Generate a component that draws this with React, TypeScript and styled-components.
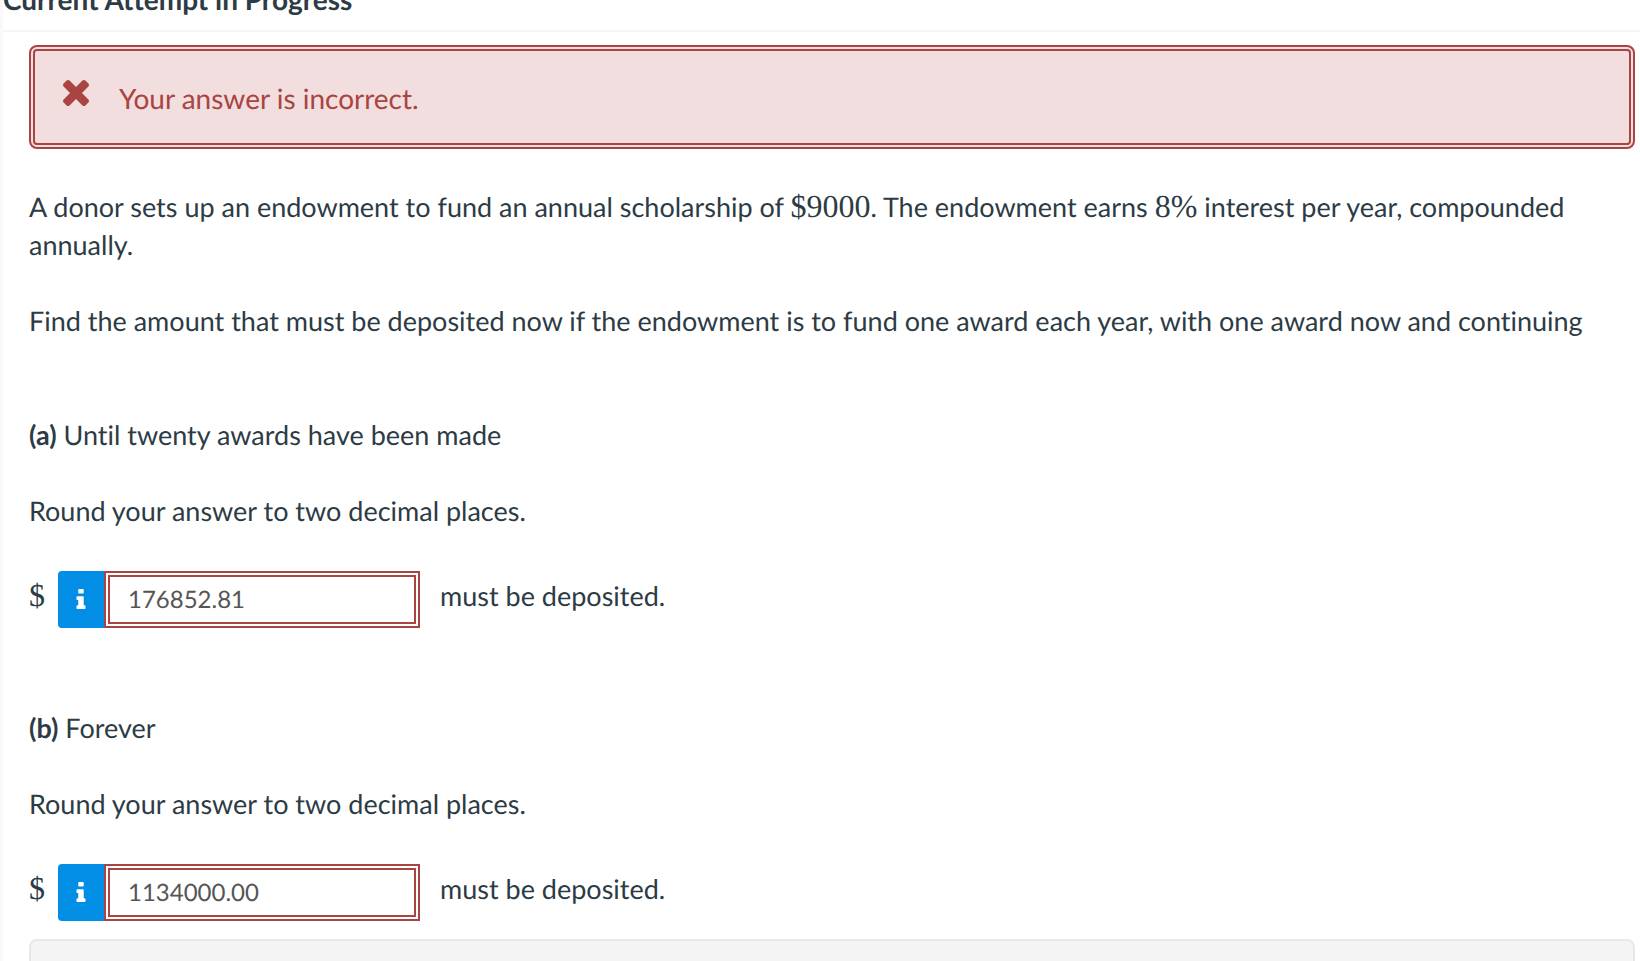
import React from "react";
import styled, { createGlobalStyle } from "styled-components";

const GlobalStyle = createGlobalStyle`
  * { box-sizing: border-box; }
  html, body { margin: 0; background: #fff; overflow: hidden; }
  body {
    font-family: Lato, "Liberation Sans", sans-serif;
    font-size: 27px;
    line-height: 38px;
    color: #2d3b45;
    font-variant-ligatures: none;
    text-rendering: geometricPrecision;
  }
`;

const Page = styled.main`
  border-left: 3px solid #f9f9f9;
  height: 100vh;
  overflow: hidden;
`;

const Header = styled.header`
  height: 32px;
  display: flex;
  align-items: flex-end;
  padding-bottom: 12px;
  border-bottom: 2px solid #f5f5f5;
`;

const Title = styled.h1`
  margin: 0;
  font-size: 28px;
  line-height: 38px;
  font-weight: 700;
`;

const Body = styled.div`
  padding: 13px 5px 0 26px;
`;

const Alert = styled.div`
  display: flex;
  align-items: center;
  gap: 30px;
  height: 104px;
  padding: 2px 28px 0;
  border: 6px double #a94442;
  border-radius: 8px;
  background: #f2dede;
  color: #a94442;
  font-size: 28px;
`;

const CrossIcon = styled.svg`
  width: 26px;
  height: 26px;
  margin-bottom: 10px;
  fill: currentColor;
`;

const InfoIcon = styled.svg`
  width: 10px;
  height: 20px;
  margin-bottom: 2px;
  fill: currentColor;
`;

const Paragraph = styled.p<{ $gap?: number }>`
  margin: ${(p) => p.$gap ?? 38}px 0 0;
`;

const MathText = styled.span`
  font-family: "Liberation Serif", serif;
  font-size: 32px;
  line-height: 1;
`;

const AnswerRow = styled.div`
  display: flex;
  align-items: center;
  margin-top: 41px;
`;

const RowText = styled.span`
  padding-bottom: 8px;
`;

const Group = styled.div`
  display: flex;
  height: 57px;
  margin: 0 20px 0 13px;
`;

const InfoButton = styled.button`
  display: flex;
  align-items: center;
  justify-content: center;
  width: 46px;
  padding: 0;
  border: 0;
  border-radius: 4px 0 0 4px;
  background: #028ee4;
  color: #fff;
`;

const AnswerInput = styled.input`
  width: 316px;
  padding: 0 18px;
  border: 6px double #a94442;
  border-radius: 0;
  background: #fff;
  color: #555;
  font: 24px Lato, "Liberation Sans", sans-serif;
  text-rendering: geometricPrecision;
`;

const Footer = styled.footer`
  height: 80px;
  margin-top: 18px;
  border: 2px solid #e8e8e8;
  border-radius: 8px;
  background: #f4f4f4;
`;

const Answer = ({ label, value }: { label: string; value: string }) => (
  <AnswerRow>
    <RowText><MathText>$</MathText></RowText>
    <Group>
      <InfoButton type="button" aria-label="Answer information">
        <InfoIcon viewBox="576 128 640 1408" aria-hidden="true">
          <path d="M1216 1344v128q0 26-19 45t-45 19h-512q-26 0-45-19t-19-45v-128q0-26 19-45t45-19h64v-384h-64q-26 0-45-19t-19-45v-128q0-26 19-45t45-19h384q26 0 45 19t19 45v576h64q26 0 45 19t19 45zm-128-1152v192q0 26-19 45t-45 19h-256q-26 0-45-19t-19-45v-192q0-26 19-45t45-19h256q26 0 45 19t19 45z" />
        </InfoIcon>
      </InfoButton>
      <AnswerInput aria-label={label} defaultValue={value} />
    </Group>
    <RowText>must be deposited.</RowText>
  </AnswerRow>
);

export default function App() {
  return (
    <>
      <GlobalStyle />
      <Page>
        <Header><Title>Current Attempt in Progress</Title></Header>
        <Body>
          <Alert role="alert">
            <CrossIcon viewBox="302 366 1188 1188" aria-hidden="true">
              <path d="M1490 1322q0 40-28 68l-136 136q-28 28-68 28t-68-28l-294-294-294 294q-28 28-68 28t-68-28l-136-136q-28-28-28-68t28-68l294-294-294-294q-28-28-28-68t28-68l136-136q28-28 68-28t68 28l294 294 294-294q28-28 68-28t68 28l136 136q28 28 28 68t-28 68l-294 294 294 294q28 28 28 68z" />
            </CrossIcon>
            <span>Your answer is incorrect.</span>
          </Alert>
          <Paragraph $gap={39}>
            A donor sets up an endowment to fund an annual scholarship of <MathText>$9000</MathText>. The endowment
            earns <MathText>8%</MathText> interest per year, compounded annually.
          </Paragraph>
          <Paragraph>
            Find the amount that must be deposited now if the endowment is to fund one award each year, with one award
            now and continuing
          </Paragraph>
          <Paragraph $gap={76}><strong>(a)</strong> Until twenty awards have been made</Paragraph>
          <Paragraph>Round your answer to two decimal places.</Paragraph>
          <Answer label="Deposit for twenty awards" value="176852.81" />
          <Paragraph $gap={81}><strong>(b)</strong> Forever</Paragraph>
          <Paragraph>Round your answer to two decimal places.</Paragraph>
          <Answer label="Deposit for awards forever" value="1134000.00" />
          <Footer />
        </Body>
      </Page>
    </>
  );
}
